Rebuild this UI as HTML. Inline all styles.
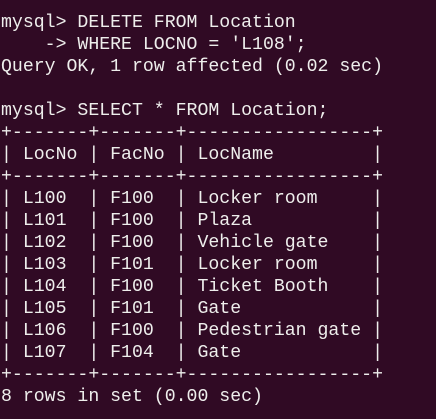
<!DOCTYPE html>
<html><head><meta charset="utf-8"><style>
html,body{margin:0;padding:0;background:#300a24;width:436px;height:419px;overflow:hidden}
pre{margin:0;position:absolute;left:1px;top:12px;font-family:"Liberation Mono","DejaVu Sans Mono",monospace;font-size:18.2px;line-height:22px;color:#eeeeec}
</style></head><body><pre>mysql&gt; DELETE FROM Location
    -&gt; WHERE LOCNO = 'L108';
Query OK, 1 row affected (0.02 sec)

mysql&gt; SELECT * FROM Location;
+-------+-------+-----------------+
| LocNo | FacNo | LocName         |
+-------+-------+-----------------+
| L100  | F100  | Locker room     |
| L101  | F100  | Plaza           |
| L102  | F100  | Vehicle gate    |
| L103  | F101  | Locker room     |
| L104  | F100  | Ticket Booth    |
| L105  | F101  | Gate            |
| L106  | F100  | Pedestrian gate |
| L107  | F104  | Gate            |
+-------+-------+-----------------+
8 rows in set (0.00 sec)</pre></body></html>
